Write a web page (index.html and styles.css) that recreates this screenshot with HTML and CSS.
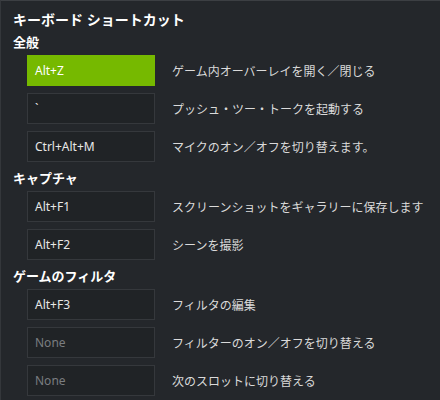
FILE: index.html
```html
<!DOCTYPE html>
<html lang="ja">
<head>
    <meta charset="UTF-8">
    <meta name="viewport" content="width=device-width, initial-scale=1.0">
    <title>キーボード ショートカット</title>
    <link rel="stylesheet" href="styles.css">
</head>
<body>
    <div class="panel">
        <h1 class="title">キーボード ショートカット</h1>

        <h2 class="group">全般</h2>
        <div class="row">
            <div class="key active">Alt+Z</div>
            <div class="desc">ゲーム内オーバーレイを開く／閉じる</div>
        </div>
        <div class="row">
            <div class="key">`</div>
            <div class="desc">プッシュ・ツー・トークを起動する</div>
        </div>
        <div class="row">
            <div class="key">Ctrl+Alt+M</div>
            <div class="desc">マイクのオン／オフを切り替えます。</div>
        </div>

        <h2 class="group">キャプチャ</h2>
        <div class="row">
            <div class="key">Alt+F1</div>
            <div class="desc">スクリーンショットをギャラリーに保存します</div>
        </div>
        <div class="row">
            <div class="key">Alt+F2</div>
            <div class="desc">シーンを撮影</div>
        </div>

        <h2 class="group">ゲームのフィルタ</h2>
        <div class="row">
            <div class="key">Alt+F3</div>
            <div class="desc">フィルタの編集</div>
        </div>
        <div class="row">
            <div class="key empty">None</div>
            <div class="desc">フィルターのオン／オフを切り替える</div>
        </div>
        <div class="row">
            <div class="key empty">None</div>
            <div class="desc">次のスロットに切り替える</div>
        </div>
    </div>
</body>
</html>
```

FILE: styles.css
```css
html, body {
    margin: 0;
    padding: 0;
    height: 100%;
}
body {
    background-color: #24272b;
    font-family: "Noto Sans", "Noto Sans CJK JP", sans-serif;
    color: #dcdcdc;
    overflow: hidden;
}
.panel {
    box-sizing: border-box;
    height: 100%;
    border-top: 1px solid #3c3f43;
    border-left: 1px solid #34373b;
    padding: 9px 0 0 12px;
}
.title {
    margin: 0 0 3px 0;
    font-size: 14px;
    line-height: 20px;
    font-weight: bold;
    color: #ffffff;
}
.group {
    margin: -1px 0 3px 0;
    font-size: 13px;
    line-height: 20px;
    font-weight: bold;
    color: #ffffff;
}
.row {
    display: flex;
    align-items: center;
    gap: 17px;
    margin: 0 0 7px 14px;
}
.key {
    box-sizing: border-box;
    width: 128px;
    height: 31px;
    padding: 0 7px;
    display: flex;
    align-items: center;
    background-color: #202326;
    border: 1px solid #35383c;
    font-size: 12px;
    color: #e8e8e8;
}
.key.active {
    background-color: #76b900;
    border-color: #76b900;
    color: #ffffff;
}
.key.empty {
    color: #7a7d80;
}
.desc {
    font-size: 12px;
    color: #dadada;
}
```
